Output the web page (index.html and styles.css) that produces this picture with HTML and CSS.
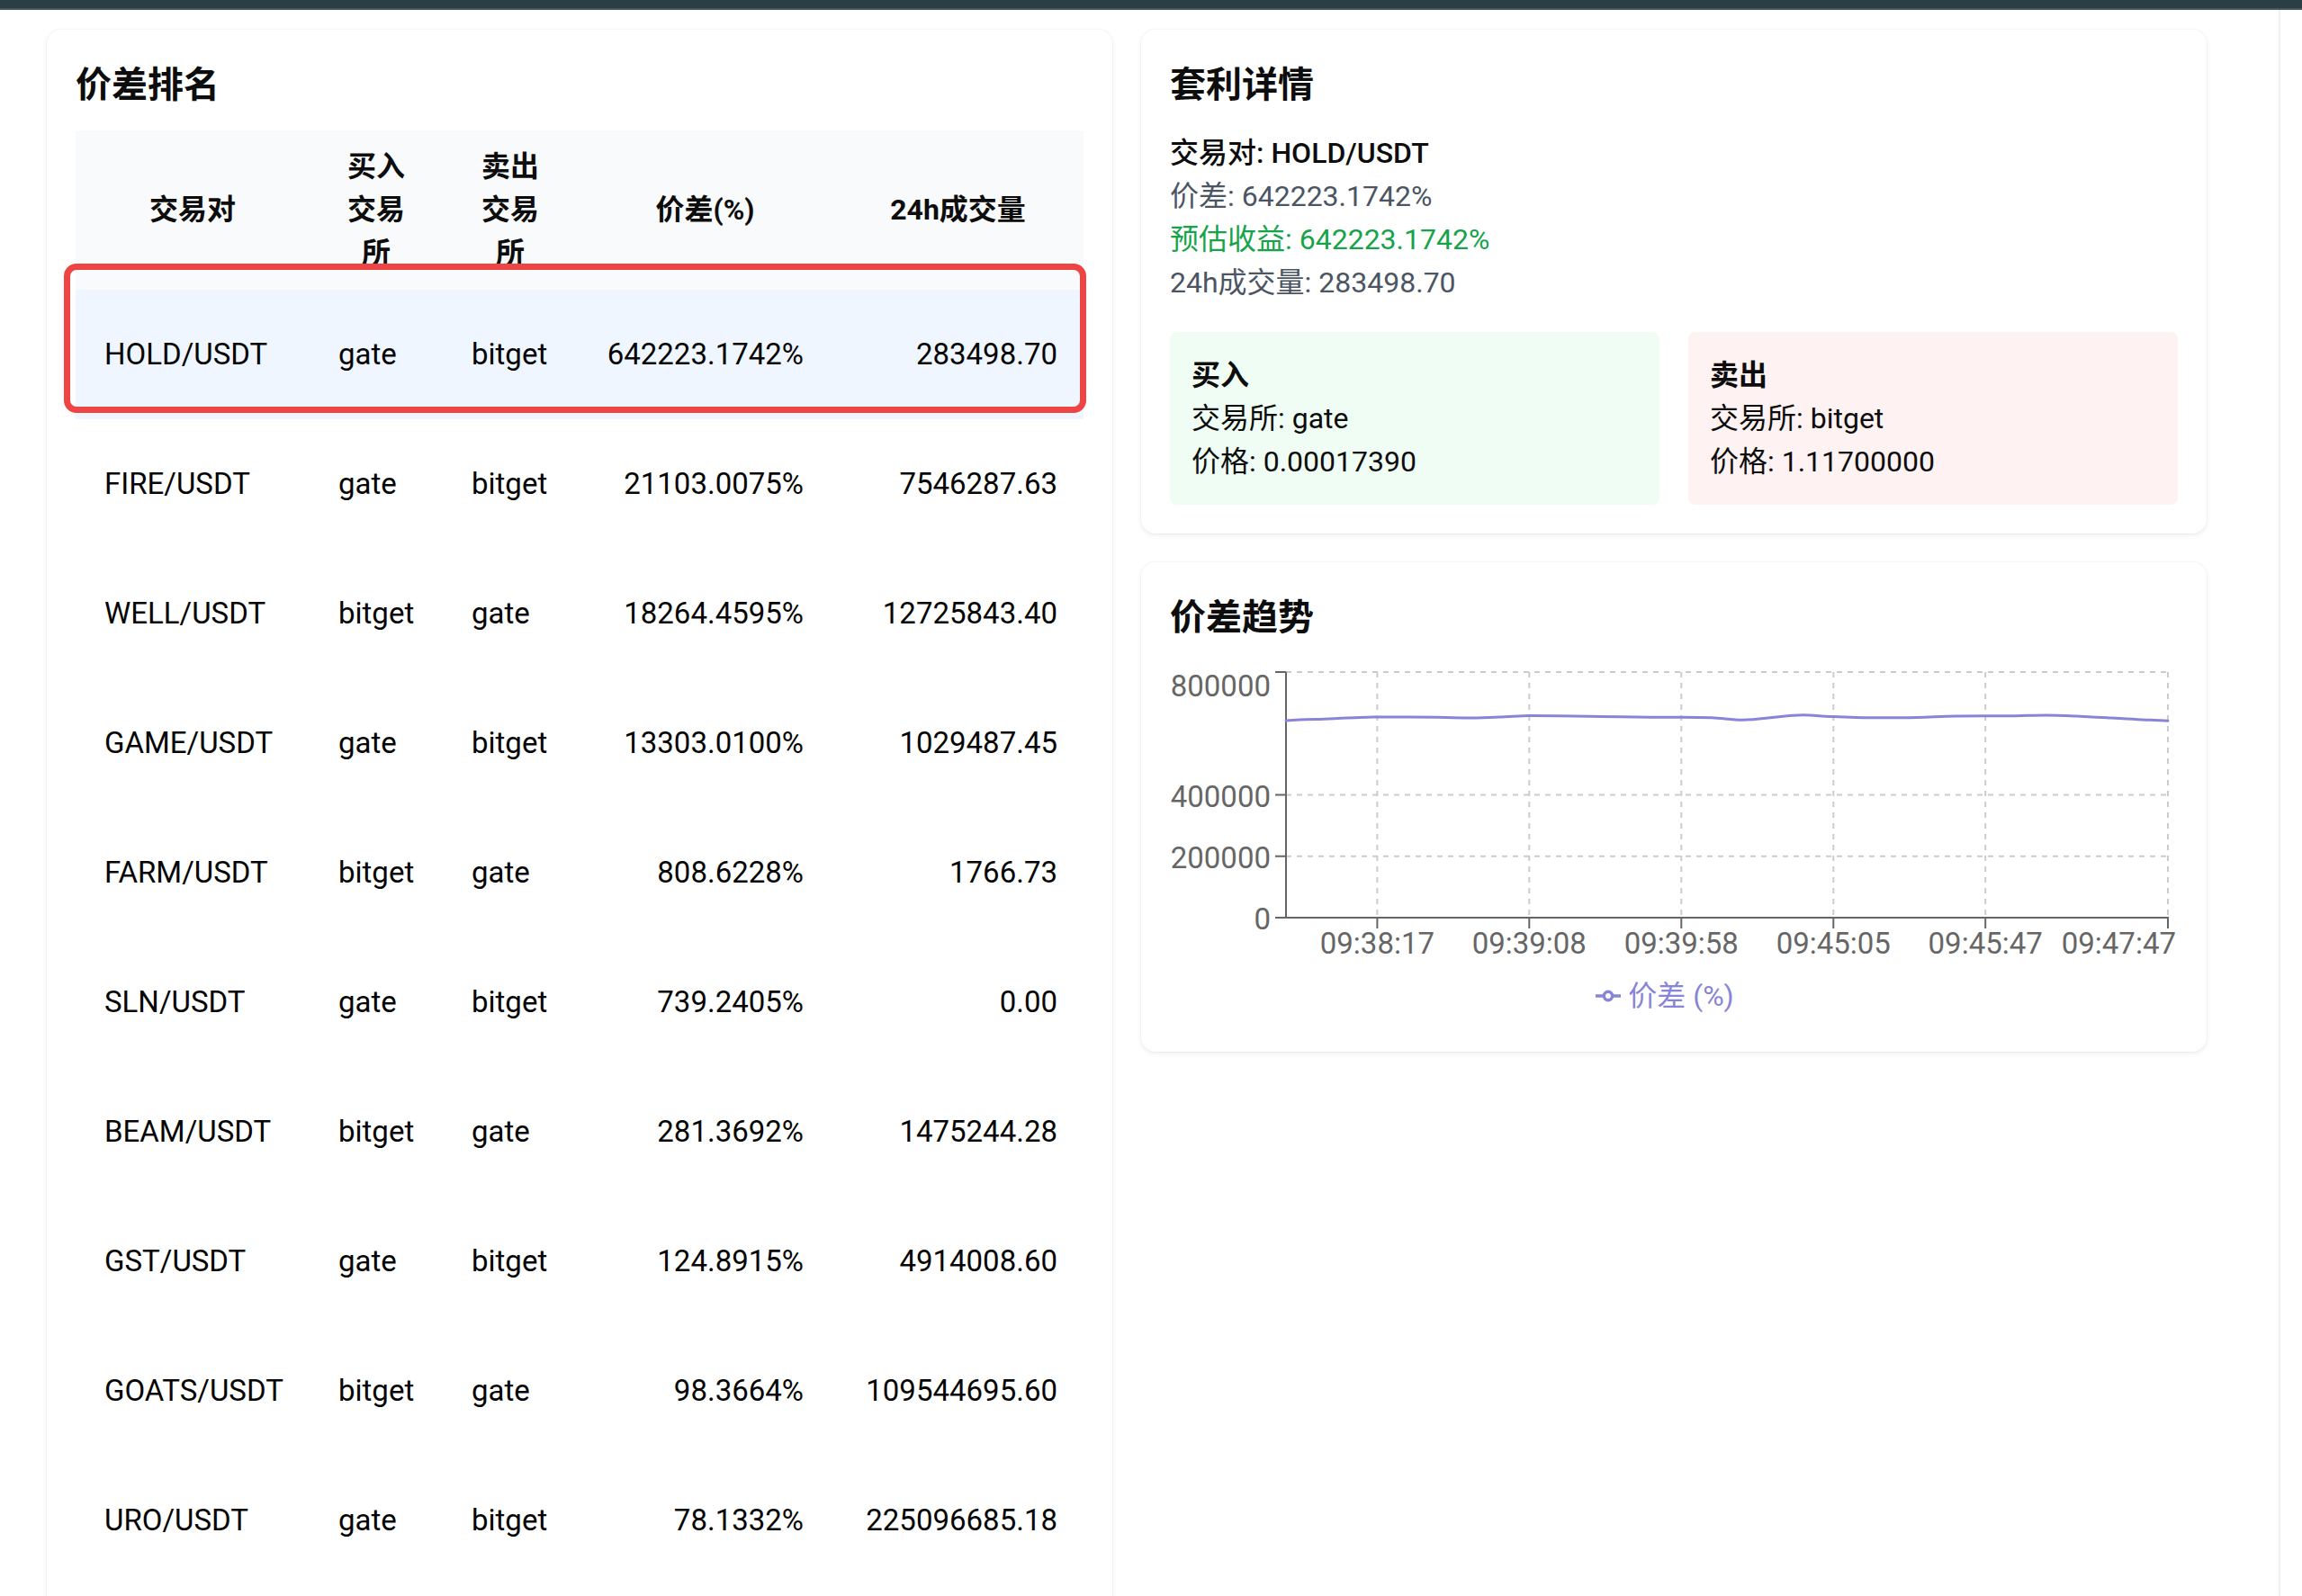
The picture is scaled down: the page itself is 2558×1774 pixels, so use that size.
FILE: index.html
```html
<!DOCTYPE html>
<html lang="zh-CN">
<head>
<meta charset="utf-8">
<title>套利监控</title>
<link rel="stylesheet" href="styles.css">
</head>
<body>
<div class="topbar"></div>
<div class="page">
  <main class="main">
    <section class="card rank-card">
      <h2 class="card-title">价差排名</h2>
      <table class="rank-table">
        <colgroup>
          <col class="c-pair"><col class="c-buy"><col class="c-sell"><col class="c-pct"><col class="c-vol">
        </colgroup>
        <thead>
          <tr><th>交易对</th><th>买入交易所</th><th>卖出交易所</th><th>价差(%)</th><th>24h成交量</th></tr>
        </thead>
        <tbody>
          <tr class="active"><td>HOLD/USDT</td><td>gate</td><td>bitget</td><td class="num">642223.1742%</td><td class="num last">283498.70</td></tr>
          <tr><td>FIRE/USDT</td><td>gate</td><td>bitget</td><td class="num">21103.0075%</td><td class="num last">7546287.63</td></tr>
          <tr><td>WELL/USDT</td><td>bitget</td><td>gate</td><td class="num">18264.4595%</td><td class="num last">12725843.40</td></tr>
          <tr><td>GAME/USDT</td><td>gate</td><td>bitget</td><td class="num">13303.0100%</td><td class="num last">1029487.45</td></tr>
          <tr><td>FARM/USDT</td><td>bitget</td><td>gate</td><td class="num">808.6228%</td><td class="num last">1766.73</td></tr>
          <tr><td>SLN/USDT</td><td>gate</td><td>bitget</td><td class="num">739.2405%</td><td class="num last">0.00</td></tr>
          <tr><td>BEAM/USDT</td><td>bitget</td><td>gate</td><td class="num">281.3692%</td><td class="num last">1475244.28</td></tr>
          <tr><td>GST/USDT</td><td>gate</td><td>bitget</td><td class="num">124.8915%</td><td class="num last">4914008.60</td></tr>
          <tr><td>GOATS/USDT</td><td>bitget</td><td>gate</td><td class="num">98.3664%</td><td class="num last">109544695.60</td></tr>
          <tr><td>URO/USDT</td><td>gate</td><td>bitget</td><td class="num">78.1332%</td><td class="num last">225096685.18</td></tr>
        </tbody>
      </table>
      <div class="highlight-box"></div>
    </section>

    <div class="side">
      <section class="card">
        <h2 class="card-title">套利详情</h2>
        <div class="info">
          <p class="info-pair">交易对: HOLD/USDT</p>
          <p class="muted">价差: 642223.1742%</p>
          <p class="profit">预估收益: 642223.1742%</p>
          <p class="muted">24h成交量: 283498.70</p>
        </div>
        <div class="trade-grid">
          <div class="trade buy">
            <p class="trade-title">买入</p>
            <p>交易所: gate</p>
            <p>价格: 0.00017390</p>
          </div>
          <div class="trade sell">
            <p class="trade-title">卖出</p>
            <p>交易所: bitget</p>
            <p>价格: 1.11700000</p>
          </div>
        </div>
      </section>

      <section class="card">
        <h2 class="card-title">价差趋势</h2>
        <div class="chart">
          <svg class="chart-svg" width="1120" height="340" viewBox="0 0 1120 340">
            <g class="grid" stroke="#ccc" stroke-width="2" stroke-dasharray="6 6" fill="none">
              <line x1="129" y1="10" x2="1109" y2="10"/>
              <line x1="129" y1="146.5" x2="1109" y2="146.5"/>
              <line x1="129" y1="214.75" x2="1109" y2="214.75"/>
              <line x1="230.4" y1="10" x2="230.4" y2="283"/>
              <line x1="399.3" y1="10" x2="399.3" y2="283"/>
              <line x1="568.3" y1="10" x2="568.3" y2="283"/>
              <line x1="737.3" y1="10" x2="737.3" y2="283"/>
              <line x1="906.2" y1="10" x2="906.2" y2="283"/>
              <line x1="1109" y1="10" x2="1109" y2="283"/>
            </g>
            <g stroke="#666" stroke-width="2" fill="none">
              <line x1="129" y1="10" x2="129" y2="284"/>
              <line x1="128" y1="283" x2="1110" y2="283"/>
              <line x1="117" y1="10" x2="129" y2="10"/>
              <line x1="117" y1="146.5" x2="129" y2="146.5"/>
              <line x1="117" y1="214.75" x2="129" y2="214.75"/>
              <line x1="117" y1="283" x2="129" y2="283"/>
              <line x1="230.4" y1="283" x2="230.4" y2="295"/>
              <line x1="399.3" y1="283" x2="399.3" y2="295"/>
              <line x1="568.3" y1="283" x2="568.3" y2="295"/>
              <line x1="737.3" y1="283" x2="737.3" y2="295"/>
              <line x1="906.2" y1="283" x2="906.2" y2="295"/>
              <line x1="1109" y1="283" x2="1109" y2="295"/>
            </g>
            <g class="tick-text" fill="#666" text-anchor="end">
              <text x="112" y="37">800000</text>
              <text x="112" y="160">400000</text>
              <text x="112" y="228">200000</text>
              <text x="112" y="295.5">0</text>
            </g>
            <g class="tick-text" fill="#666" text-anchor="middle">
              <text x="230.4" y="323">09:38:17</text>
              <text x="399.3" y="323">09:39:08</text>
              <text x="568.3" y="323">09:39:58</text>
              <text x="737.3" y="323">09:45:05</text>
              <text x="906.2" y="323">09:45:47</text>
              <text x="1118" y="323" text-anchor="end">09:47:47</text>
            </g>
            <path fill="none" stroke="#8884d8" stroke-width="3" stroke-linejoin="round" stroke-linecap="round"
              d="M129,64 C145,63 150,62.5 162.8,62.5 S185,61.3 196.6,61 S220,60.1 230.4,60 L264.2,60 L298,60.3 C310,60.6 320,61 331.8,61 S355,60.3 365.6,60 S390,58.6 399.3,58.5 L433.1,58.8 L466.9,59.3 L500.7,59.8 L534.5,60.2 L568.3,60.3 C585,60.4 592,60.5 602.1,60.8 C615,61.5 625,63.3 635.9,63.3 C650,63.3 660,61.5 669.7,60.5 C683,59 693,57.7 703.5,57.7 C715,57.7 725,59.3 737.3,59.6 C750,60 760,60.7 771.1,60.7 L804.9,60.7 C818,60.7 828,60.5 838.7,60.2 C850,59.8 860,59.3 872.4,59 L906.2,58.8 L940,58.7 C952,58.5 962,58 973.8,58 C985,58 996,58.5 1007.6,59 C1020,59.6 1030,60.2 1041.4,60.8 C1053,61.5 1064,62.2 1075.2,62.7 C1088,63.3 1098,63.9 1109,64.3"/>
          </svg>
          <div class="legend">
            <div class="legend-item">
              <svg class="legend-icon" width="28" height="28" viewBox="0 0 32 32">
                <path stroke-width="4" fill="none" stroke="#8884d8" d="M0,16h10.666666666666666 A5.333333333333333,5.333333333333333,0,1,1,21.333333333333332,16 H32M21.333333333333332,16 A5.333333333333333,5.333333333333333,0,1,1,10.666666666666666,16"/>
              </svg>
              <span class="legend-text">价差 (%)</span>
            </div>
          </div>
        </div>
      </section>
    </div>
  </main>
  <div class="edge"></div>
</div>
</body>
</html>
```

FILE: styles.css
```css
html, body {
  margin: 0;
  padding: 0;
  height: 100%;
  overflow: hidden;
  background: #ffffff;
}

body {
  font-family: Roboto, "Noto Sans CJK SC", sans-serif;
  font-size: 32px;
  line-height: 48px;
  color: #111111;
}

.topbar {
  height: 9px;
  background: #2b3e45;
  border-bottom: 2px solid #47565c;
}

.page {
  display: flex;
  align-items: stretch;
  height: 1763px;
}

.main {
  flex: 1;
  padding: 22px 0 0 52px;
  display: grid;
  grid-template-columns: 1184px 1184px;
  column-gap: 32px;
  align-items: start;
  align-content: start;
}

.edge {
  width: 24px;
  border-left: 2px solid #f0f0f0;
  box-shadow: -2px 0 4px rgba(0, 0, 0, 0.02);
}

.card {
  position: relative;
  background: #ffffff;
  border-radius: 16px;
  padding: 32px;
  box-shadow: 0 2px 6px rgba(0, 0, 0, 0.07), 0 0 0 1px rgba(0, 0, 0, 0.025);
}

.card-title {
  margin: 0 0 22px;
  padding-top: 2px;
  font-size: 40px;
  line-height: 56px;
  font-weight: 700;
  color: #0d0d0d;
}

.side {
  display: flex;
  flex-direction: column;
  gap: 32px;
}

/* ranking table */
.rank-table {
  width: 100%;
  border-collapse: collapse;
  table-layout: fixed;
}

.c-pair { width: 260px; }
.c-buy { width: 148px; }
.c-sell { width: 150px; }
.c-pct { width: 283px; }
.c-vol { width: 279px; }

.rank-table th {
  background: #f9fafb;
  padding: 16px 32px 17px;
  font-weight: 700;
  text-align: center;
  vertical-align: middle;
  line-height: 48px;
  color: #0d0d0d;
}

.rank-table td {
  padding: 48px 32px;
  font-size: 33px;
  line-height: 48px;
  white-space: nowrap;
  text-align: left;
  color: #050505;
}

.rank-table td.num {
  text-align: right;
}

.rank-table td.last {
  padding-right: 29px;
}

.rank-table tr.active td {
  background: #eff6ff;
}

.highlight-box {
  position: absolute;
  left: 19px;
  top: 260px;
  width: 1136px;
  height: 166px;
  box-sizing: border-box;
  border: 7px solid #ef4444;
  border-radius: 14px;
  pointer-events: none;
}

/* details */
.info {
  padding-top: 1px;
}

.info p,
.trade p {
  margin: 0;
}

.info-pair {
  font-weight: 500;
  color: #0d0d0d;
}

.muted {
  color: #4b5563;
}

.profit {
  color: #16a34a;
}

.trade-grid {
  display: grid;
  grid-template-columns: 1fr 1fr;
  gap: 32px;
  margin-top: 31px;
}

.trade {
  padding: 24px;
  border-radius: 8px;
  color: #0d0d0d;
}

.trade.buy {
  background: #f0fdf4;
}

.trade.sell {
  background: #fef2f2;
}

.trade-title {
  font-weight: 700;
}

/* chart */
.chart {
  height: 400px;
}

.chart-svg {
  display: block;
  overflow: visible;
}

.tick-text text {
  font-family: Roboto, "Noto Sans CJK SC", sans-serif;
  font-size: 33px;
}

.legend {
  height: 60px;
  display: flex;
  justify-content: center;
  align-items: center;
  color: #8884d8;
}

.legend-item {
  display: flex;
  align-items: center;
  margin-right: 20px;
}

.legend-icon {
  display: block;
  margin-right: 8px;
}

.legend-text {
  line-height: 48px;
}
```
